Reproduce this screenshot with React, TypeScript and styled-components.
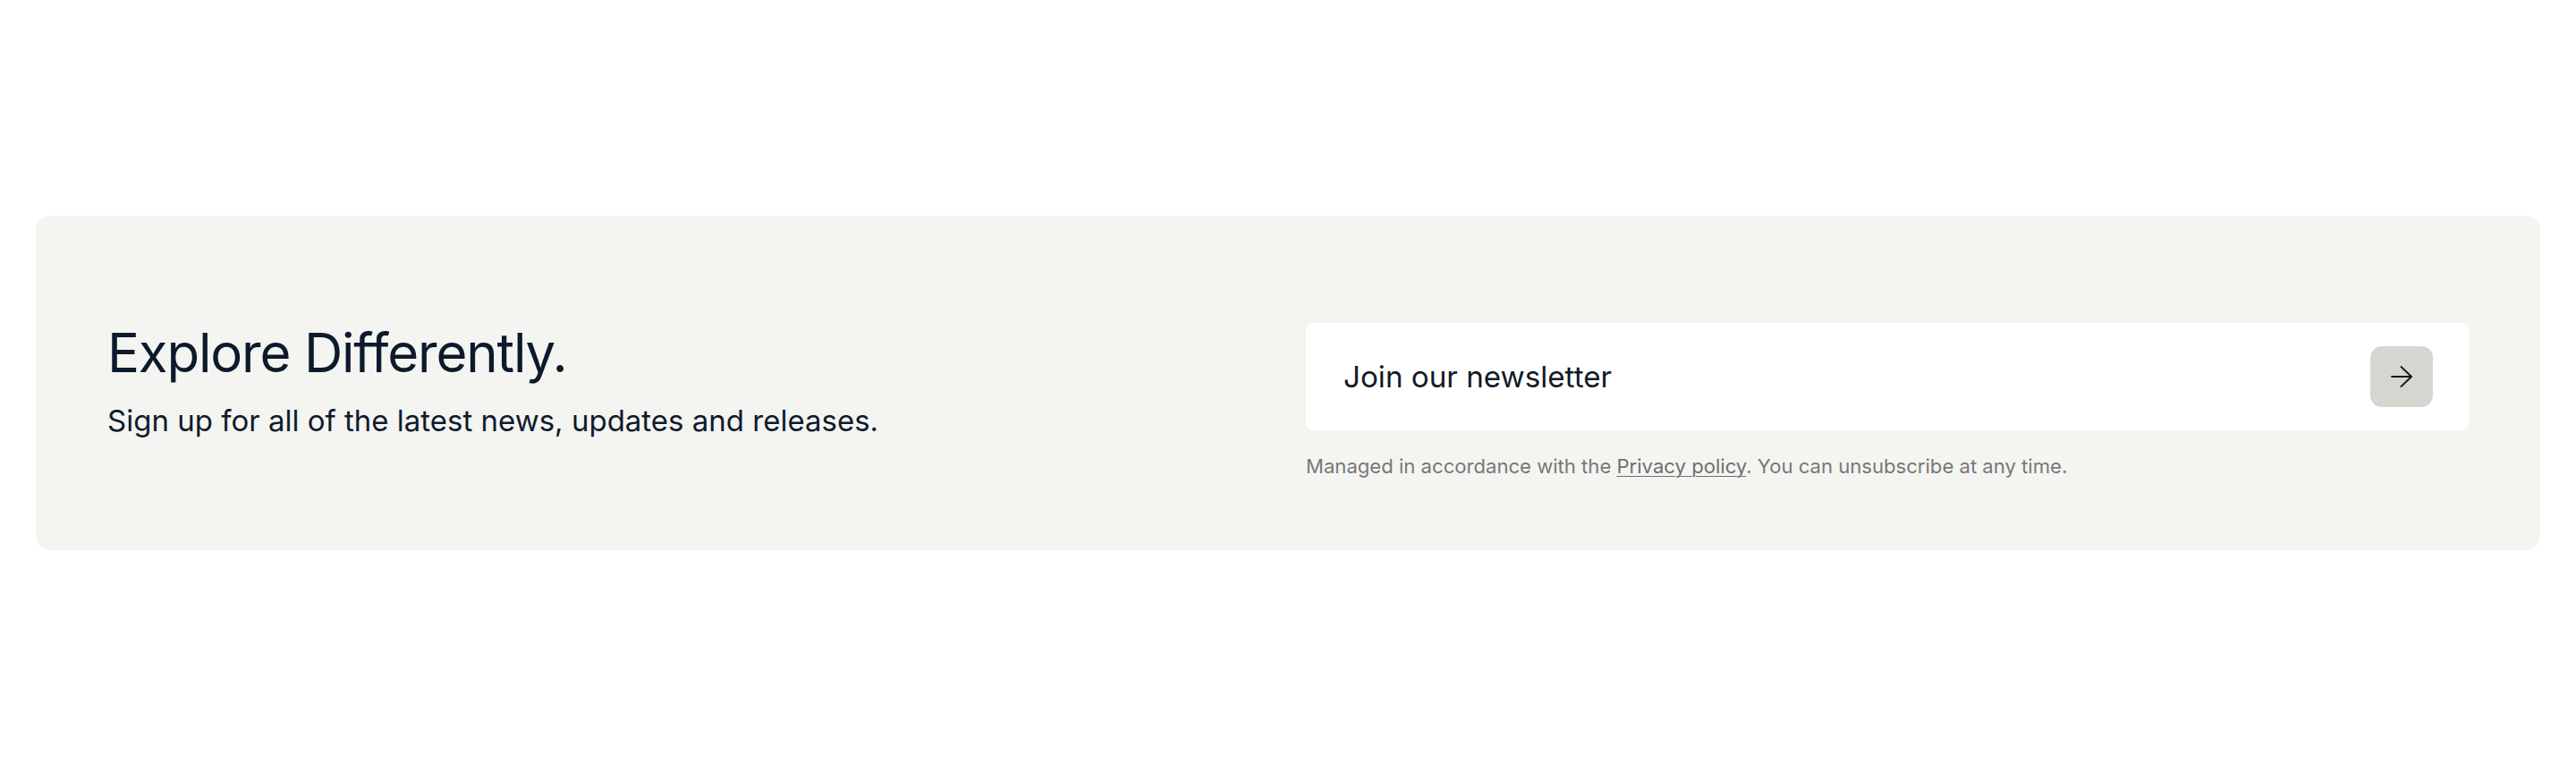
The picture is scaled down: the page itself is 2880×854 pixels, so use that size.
import React from 'react';
import { styled, createGlobalStyle } from 'styled-components';

const GlobalStyle = createGlobalStyle`
  html, body {
    margin: 0;
    padding: 0;
    background: #ffffff;
    font-family: Inter, "Noto Sans", "Liberation Sans", sans-serif;
  }
`;

const Page = styled.div`
  padding: 241px 40px 239px;
  box-sizing: border-box;
`;

const Card = styled.section`
  display: grid;
  grid-template-columns: 1fr 1fr;
  column-gap: 40px;
  align-items: start;
  padding: 120px 80px 77px;
  background: #f4f4f1;
  border-radius: 16px;
`;

const Intro = styled.div`
  display: flex;
  flex-direction: column;
  gap: 22px;
`;

const Title = styled.h2`
  margin: 0;
  font-size: 60px;
  line-height: 66px;
  font-weight: 400;
  letter-spacing: -1.2px;
  color: #0c1a2c;
`;

const Lead = styled.p`
  margin: 0;
  font-size: 33px;
  line-height: 42px;
  font-weight: 400;
  color: #0f1b2d;
`;

const SignupForm = styled.form`
  display: flex;
  flex-direction: column;
  gap: 24px;
`;

const Field = styled.div`
  display: flex;
  align-items: center;
  justify-content: space-between;
  height: 120px;
  padding: 0 40px 0 42px;
  box-sizing: border-box;
  background: #ffffff;
  border-radius: 8px;
`;

const Label = styled.span`
  font-size: 33.2px;
  color: #111a27;
`;

const Submit = styled.button`
  display: flex;
  align-items: center;
  justify-content: center;
  width: 70px;
  height: 68px;
  padding: 0;
  border: 0;
  border-radius: 13px;
  background: #d7d5d0;
  color: #15191f;
  cursor: pointer;
`;

const Note = styled.p`
  margin: 0;
  font-size: 22.1px;
  line-height: 33px;
  color: #787878;
`;

const NoteLink = styled.a`
  color: #6f6f6f;
  text-decoration: underline;
  text-underline-offset: 3px;
  text-decoration-thickness: 1px;
`;

function ArrowIcon() {
  return (
    <svg width="24" height="24" viewBox="0 0 24 24" fill="none" stroke="currentColor" strokeWidth="1.9" strokeLinecap="round" strokeLinejoin="round">
      <path d="M1 12h22" />
      <path d="M11.5 1 23 12 11.5 23" />
    </svg>
  );
}

function App() {
  return (
    <Page>
      <GlobalStyle />
      <Card>
        <Intro>
          <Title>Explore Differently.</Title>
          <Lead>Sign up for all of the latest news, updates and releases.</Lead>
        </Intro>
        <SignupForm onSubmit={e => e.preventDefault()}>
          <Field>
            <Label>Join our newsletter</Label>
            <Submit type="submit" aria-label="Subscribe">
              <ArrowIcon />
            </Submit>
          </Field>
          <Note>
            Managed in accordance with the <NoteLink href="#">Privacy policy</NoteLink>. You can unsubscribe at any time.
          </Note>
        </SignupForm>
      </Card>
    </Page>
  );
}

export default App;
